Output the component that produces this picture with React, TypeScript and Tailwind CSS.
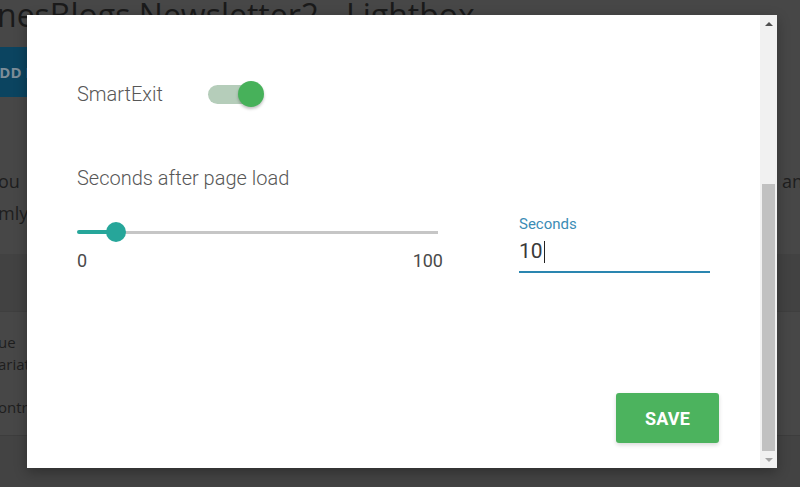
import React from "react";

export default function App() {
  return (
    <div className="relative w-[800px] h-[487px] overflow-hidden bg-[#474747] font-['Open_Sans',sans-serif]">
      {/* background page (dimmed) */}
      <div className="flex flex-col w-full h-full text-[#1c1c1c]">
        <div className="h-[40px] flex items-end pb-[10px]">
          <div className="ml-[-3px] text-[32px] leading-[30px] font-medium whitespace-nowrap text-[#1a1a1a]">
            nesBlogs Newsletter2 - Lightbox
          </div>
        </div>
        <div className="mt-[7px] h-[50px] w-[60px] ml-[-33px] bg-[#0b4460] flex items-center pl-[22px] text-[15px] font-bold text-[#7d8d98] whitespace-nowrap">
          ADD NEW
        </div>
        <div className="mt-[68px] flex justify-between text-[18px] leading-[32px] text-[#1e1e1e]">
          <div className="ml-[-2px]">
            <div>ou</div>
            <div>mly</div>
          </div>
          <div className="mr-[-3px]">an</div>
        </div>
        <div className="mt-[25px] h-[58px] bg-[#424242] border-b border-[#3f3f3f]" />
        <div className="h-[124px] bg-[#474747] border-b border-[#3d3d3d] text-[15px] text-[#1e1e1e] pt-[19px]">
          <div className="leading-[22px] ml-[-2px]">ue</div>
          <div className="leading-[22px] ml-[-2px]">ariat</div>
          <div className="leading-[22px] ml-[-2px] mt-[21px]">ontr</div>
        </div>
        <div className="flex-1 bg-[#434343]" />
      </div>

      {/* modal */}
      <div className="absolute left-[27px] top-[15px] w-[750px] h-[453px] bg-white flex shadow-[0_4px_12px_rgba(0,0,0,0.3)] font-['Roboto',sans-serif]">
        <div className="flex-1 flex flex-col pl-[50px] pt-[66px]">
          <div className="flex items-center h-[26px]">
            <div className="w-[131px] text-[20px] font-light text-[#575757] leading-[24px]">SmartExit</div>
            <div className="relative w-[56px] h-[26px] flex items-center">
              <div className="w-[46px] h-[19px] rounded-full bg-[#b5cdba]" />
              <div className="absolute left-[30px] top-0 w-[26px] h-[26px] rounded-full bg-[#47b15a] shadow-[0_2px_3px_rgba(0,0,0,0.25)]" />
            </div>
          </div>

          <div className="mt-[59px] text-[20px] font-light text-[#575757] leading-[24px]">
            Seconds after page load
          </div>

          <div className="mt-[24px] flex">
            <div className="w-[366px] pt-[8px]">
              <div className="relative w-[361px] h-[20px] flex items-center">
                <div className="h-[4px] w-[39px] bg-[#26a69a] rounded-l-full" />
                <div className="h-[3px] flex-1 bg-[#c6c6c6]" />
                <div className="absolute left-[29px] top-0 w-[20px] h-[20px] rounded-full bg-[#26a69a]" />
              </div>
              <div className="mt-[9px] flex justify-between text-[18px] leading-[20px] text-[#4a4a4a]">
                <span>0</span>
                <span>100</span>
              </div>
            </div>
            <div className="ml-[76px] w-[191px] flex flex-col">
              <div className="text-[15px] leading-[20px] text-[#3b8cb5]">Seconds</div>
              <div className="mt-[4px] h-[28px] flex items-center text-[21px] text-[#3a3a3a]">
                <span>10</span>
                <span className="ml-[1px] w-[1px] h-[22px] bg-[#222]" />
              </div>
              <div className="mt-[5px] h-[2px] bg-[#2a86b0]" />
            </div>
          </div>

          <div className="flex-1 flex items-end justify-end pr-[41px] pb-[25px]">
            <button className="w-[103px] h-[50px] rounded-[3px] bg-[#4cb35e] text-white text-[18px] font-bold tracking-[0.2px] shadow-[0_2px_4px_rgba(0,0,0,0.15)]">
              SAVE
            </button>
          </div>
        </div>

        {/* scrollbar */}
        <div className="w-[17px] bg-[#f1f1f1] flex flex-col">
          <div className="h-[17px] flex items-center justify-center">
            <div className="w-0 h-0 border-l-[4px] border-r-[4px] border-b-[4px] border-l-transparent border-r-transparent border-b-[#505050]" />
          </div>
          <div className="flex-1 flex flex-col px-[2px]">
            <div className="mt-[152px] flex-1 bg-[#c1c1c1]" />
          </div>
          <div className="h-[17px] flex items-center justify-center">
            <div className="w-0 h-0 border-l-[4px] border-r-[4px] border-t-[4px] border-l-transparent border-r-transparent border-t-[#a3a3a3]" />
          </div>
        </div>
      </div>
    </div>
  );
}
